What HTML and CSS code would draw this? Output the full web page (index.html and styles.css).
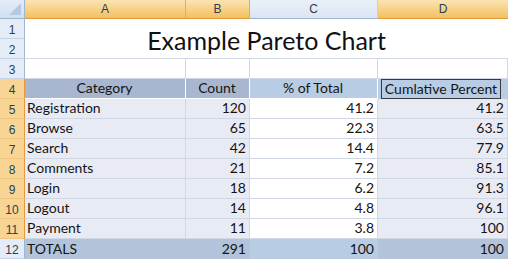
FILE: index.html
```html
<!DOCTYPE html>
<html>
<head>
<meta charset="utf-8">
<link rel="stylesheet" href="styles.css">
</head>
<body>
<div class="sheet">
  <div class="corner"><span class="tri"></span></div>
  <div class="colhead sel">A</div>
  <div class="colhead sel">B</div>
  <div class="colhead">C</div>
  <div class="colhead sel lastcol">D</div>

  <div class="rowhead">1</div>
  <div class="title">Example Pareto Chart</div>
  <div class="rowhead">2</div>

  <div class="rowhead">3</div>
  <div class="cell"></div><div class="cell"></div><div class="cell"></div><div class="cell"></div>

  <div class="rowhead sel">4</div>
  <div class="cell hdr shade center">Category</div>
  <div class="cell hdr shade center">Count</div>
  <div class="cell hdr center">% of Total</div>
  <div class="cell hdr active"><span class="box">Cumlative Percent</span></div>

  <div class="rowhead sel">5</div>
  <div class="cell lav">Registration</div><div class="cell lav num">120</div><div class="cell num">41.2</div><div class="cell lav num">41.2</div>
  <div class="rowhead sel">6</div>
  <div class="cell lav">Browse</div><div class="cell lav num">65</div><div class="cell num">22.3</div><div class="cell lav num">63.5</div>
  <div class="rowhead sel">7</div>
  <div class="cell lav">Search</div><div class="cell lav num">42</div><div class="cell num">14.4</div><div class="cell lav num">77.9</div>
  <div class="rowhead sel">8</div>
  <div class="cell lav">Comments</div><div class="cell lav num">21</div><div class="cell num">7.2</div><div class="cell lav num">85.1</div>
  <div class="rowhead sel">9</div>
  <div class="cell lav">Login</div><div class="cell lav num">18</div><div class="cell num">6.2</div><div class="cell lav num">91.3</div>
  <div class="rowhead sel">10</div>
  <div class="cell lav">Logout</div><div class="cell lav num">14</div><div class="cell num">4.8</div><div class="cell lav num">96.1</div>
  <div class="rowhead sel">11</div>
  <div class="cell lav">Payment</div><div class="cell lav num">11</div><div class="cell num">3.8</div><div class="cell lav num">100</div>

  <div class="rowhead">12</div>
  <div class="cell tot shade">TOTALS</div><div class="cell tot shade num">291</div><div class="cell tot num">100</div><div class="cell tot shade num">100</div>
</div>
</body>
</html>
```

FILE: styles.css
```css
html, body {
  margin: 0;
  padding: 0;
  background: #ffffff;
}
.sheet {
  display: grid;
  grid-template-columns: 25px 161px 64px 128px 130px;
  grid-template-rows: 19px repeat(12, 20px);
  font-family: "Lato", "Open Sans", sans-serif;
  font-size: 14px;
  color: #141414;
  width: 508px;
}
.corner {
  position: relative;
  background: linear-gradient(#e3ebf6, #d3dff0);
  border-right: 1px solid #9eb6ce;
  border-bottom: 1px solid #9eb6ce;
}
.tri {
  position: absolute;
  right: 3px;
  bottom: 3px;
  width: 0;
  height: 0;
  border-left: 12px solid transparent;
  border-bottom: 12px solid #b7c9e0;
}
.colhead {
  display: flex;
  align-items: center;
  justify-content: center;
  font-family: "Liberation Sans", "Lato", sans-serif;
  font-size: 12px;
  color: #2d3e52;
  background: linear-gradient(#eaf0f9, #dbe5f3);
  border-right: 1px solid #c1d0e2;
  border-bottom: 1px solid #9eb6ce;
}
.colhead.sel {
  background: linear-gradient(#fbe3b1, #f5cb7a 70%, #f1c15f);
  border-right: 1px solid #e4ad5c;
  border-bottom: 1px solid #e29a3c;
}
.colhead.lastcol {
  border-right: none;
}
.rowhead {
  display: flex;
  align-items: flex-end;
  justify-content: center;
  padding-bottom: 1px;
  box-sizing: border-box;
  font-family: "Liberation Sans", "Lato", sans-serif;
  font-size: 12px;
  color: #2d3e52;
  background: #e4ecf7;
  border-right: 1px solid #9eb6ce;
  border-bottom: 1px solid #c5d3e6;
}
.rowhead.sel {
  background: #f8d594;
  border-right: 1px solid #e29a3c;
  border-bottom: 1px solid #efc47e;
}
.title {
  grid-column: 2 / 6;
  grid-row: 2 / 4;
  display: flex;
  align-items: center;
  justify-content: center;
  font-family: "Lato", "Open Sans", sans-serif;
  font-size: 25px;
  color: #111111;
  padding-top: 2px;
  border-bottom: 1px solid #d0d7e5;
}
.cell {
  box-sizing: border-box;
  display: flex;
  align-items: flex-end;
  padding: 0 3px 1px 2px;
  white-space: nowrap;
  overflow: hidden;
  border-right: 1px solid #d0d7e5;
  border-bottom: 1px solid #d0d7e5;
  line-height: 18px;
}
.cell.num {
  justify-content: flex-end;
}
.cell.center {
  justify-content: center;
}
.cell.lav {
  background: #e9ebf4;
}
.cell.hdr {
  background: #b8cce4;
  border-right-color: #ffffff;
  border-bottom-color: #ffffff;
}
.cell.hdr.shade {
  background: #a8b7cf;
}
.cell.active {
  padding: 0;
  border-right: none;
  border-bottom: none;
  align-items: stretch;
}
.box {
  box-sizing: border-box;
  width: 120px;
  height: 20px;
  margin-left: 3px;
  border: 1px solid #3a3a3a;
  display: flex;
  align-items: flex-end;
  justify-content: center;
  padding-bottom: 1px;
  line-height: 17px;
}
.cell.tot {
  background: #b8cce4;
  border-right-color: #b8cce4;
  border-bottom: none;
}
.cell.tot.shade {
  background: #b2c3da;
  border-right-color: #b2c3da;
}
```
